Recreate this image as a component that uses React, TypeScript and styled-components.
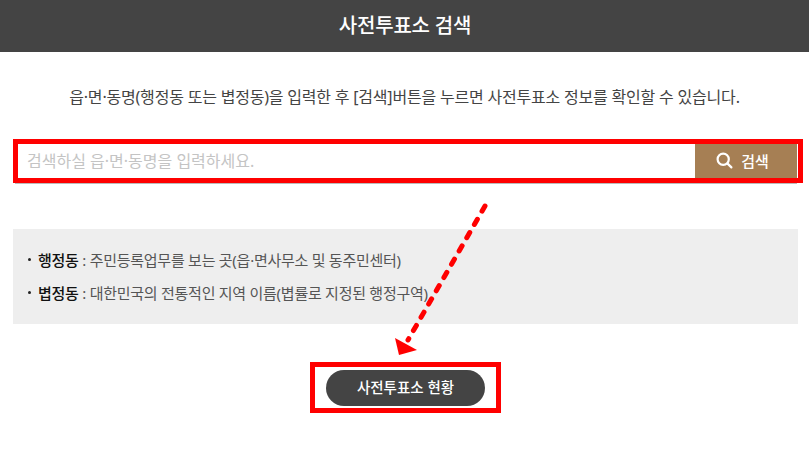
import styled, { createGlobalStyle } from "styled-components";

const GlobalStyle = createGlobalStyle`
  html, body {
    margin: 0;
    background: #fff;
    font-family: "Noto Sans", "Noto Sans CJK KR", sans-serif;
    color: #444;
  }
  * { box-sizing: border-box; }
`;

const Page = styled.div`
  position: relative;
  width: 809px;
  height: 456px;
  overflow: hidden;
`;

const Header = styled.header`
  height: 52px;
  background: #444;
  color: #fff;
  font-size: 20px;
  font-weight: 500;
  line-height: 52px;
  letter-spacing: -0.2px;
  text-align: center;
  padding-left: 1px;
`;

const Intro = styled.p`
  margin: 34px 0 0;
  font-size: 16px;
  line-height: 22px;
  letter-spacing: -0.2px;
  text-align: center;
  color: #444;
`;

const SearchFrame = styled.div`
  position: relative;
  display: flex;
  width: 790px;
  height: 44px;
  margin: 31px 0 0 13px;
  border: 5px solid #f00;
  padding-right: 1px;
  &::after {
    content: "";
    position: absolute;
    left: -3px;
    right: 1px;
    bottom: -6px;
    height: 1px;
    background: #bbb;
  }
`;

const SearchInput = styled.input`
  flex: 1;
  min-width: 0;
  height: 34px;
  border: 0;
  outline: 0;
  padding: 0 9px;
  font: inherit;
  font-size: 16px;
  &::placeholder {
    color: #c4c4c4;
    opacity: 1;
  }
`;

const SearchButton = styled.button`
  display: flex;
  align-items: center;
  justify-content: center;
  gap: 8px;
  width: 102px;
  height: 34px;
  border: 0;
  padding: 0 7px 2px 0;
  background: #a67f54;
  color: #fff;
  font: inherit;
  font-size: 15px;
  font-weight: 500;
`;

const InfoPanel = styled.ul`
  display: flex;
  flex-direction: column;
  gap: 12px;
  width: 785px;
  height: 95px;
  margin: 46px 0 0 13px;
  padding: 20px 0 0 15px;
  background: #eee;
  list-style: none;
`;

const InfoRow = styled.li`
  display: flex;
  align-items: center;
  height: 21px;
  font-size: 15px;
  letter-spacing: -0.26px;
  color: #555;
  white-space: pre;
  &::before {
    content: "";
    width: 3px;
    height: 3px;
    margin-right: 7px;
    border-radius: 50%;
    background: #222;
  }
`;

const Term = styled.strong`
  font-weight: 500;
  color: #111;
`;

const StatusFrame = styled.div`
  display: flex;
  align-items: center;
  justify-content: center;
  width: 191px;
  height: 51px;
  margin: 38px 0 0 310px;
  border: 5px solid #f00;
`;

const StatusButton = styled.button`
  width: 159px;
  height: 36px;
  border: 0;
  border-radius: 18px;
  padding: 0 0 2px;
  background: #444;
  color: #fff;
  font: inherit;
  font-size: 14.5px;
  font-weight: 500;
`;

const Arrow = styled.svg`
  position: absolute;
  left: 380px;
  top: 195px;
`;

function SearchGlyph() {
  return (
    <svg width="17" height="17" viewBox="0 0 17 17" fill="none" stroke="#fff" strokeWidth="2.2" strokeLinecap="round">
      <circle cx="7.2" cy="7.2" r="5.6" />
      <line x1="11.6" y1="11.6" x2="15.4" y2="15.4" />
    </svg>
  );
}

export default function App() {
  return (
    <Page>
      <GlobalStyle />
      <Header>사전투표소 검색</Header>
      <Intro>읍·면·동명(행정동 또는 볍정동)을 입력한 후 [검색]버튼을 누르면 사전투표소 정보를 확인할 수 있습니다.</Intro>
      <SearchFrame>
        <SearchInput placeholder="검색하실 읍·면·동명을 입력하세요." />
        <SearchButton>
          <SearchGlyph />
          검색
        </SearchButton>
      </SearchFrame>
      <InfoPanel>
        <InfoRow>
          <Term>행정동</Term> : 주민등록업무를 보는 곳(읍·면사무소 및 동주민센터)
        </InfoRow>
        <InfoRow>
          <Term>볍정동</Term> : 대한민국의 전통적인 지역 이름(볍률로 지정된 행정구역)
        </InfoRow>
      </InfoPanel>
      <StatusFrame>
        <StatusButton>사전투표소 현황</StatusButton>
      </StatusFrame>
      <Arrow width="120" height="170" viewBox="0 0 120 170">
        <line x1="105" y1="11" x2="28" y2="145" stroke="#f00" strokeWidth="5" strokeLinecap="round" strokeDasharray="6 9.3" />
        <polygon points="15,143 37,155 19,160" fill="#f00" />
      </Arrow>
    </Page>
  );
}
